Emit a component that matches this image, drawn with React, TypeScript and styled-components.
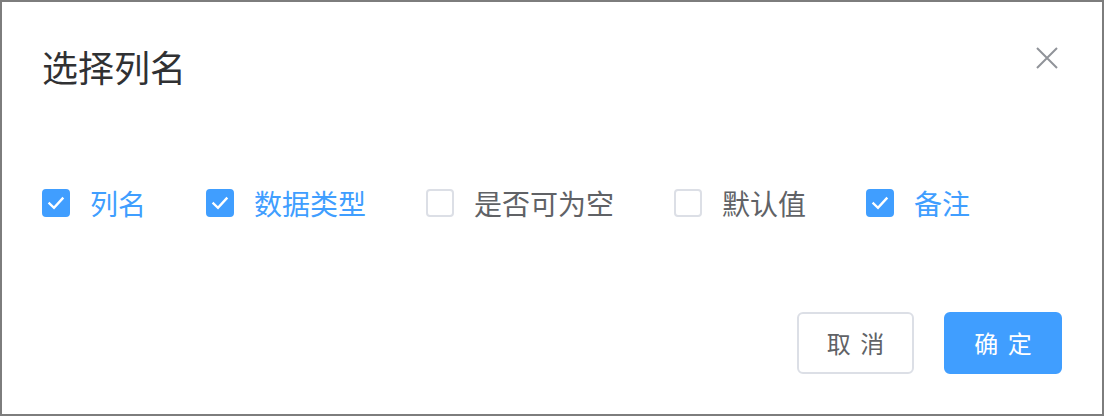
import React, { useState } from "react";
import styled, { createGlobalStyle } from "styled-components";

const Global = createGlobalStyle`
  html, body { margin: 0; padding: 0; background: #ffffff; }
  * { box-sizing: border-box; }
  body { font-family: "Noto Sans CJK SC", "Noto Sans", sans-serif; }
`;

const Dialog = styled.div`
  position: relative;
  width: 1104px;
  height: 416px;
  background: #ffffff;
  border: 2px solid #7d7d7d;
  display: flex;
  flex-direction: column;
`;

const Header = styled.div`
  padding: 40px 40px 0 40px;
`;

const Title = styled.div`
  font-size: 36px;
  line-height: 48px;
  color: #303133;
`;

const CloseButton = styled.button`
  position: absolute;
  top: 40px;
  right: 39px;
  width: 32px;
  height: 32px;
  padding: 0;
  border: none;
  background: transparent;
  cursor: pointer;
  display: flex;
  align-items: center;
  justify-content: center;
`;

const Body = styled.div`
  padding: 99px 40px 0 40px;
  flex: 1;
`;

const CheckRow = styled.div`
  display: flex;
  align-items: center;
  gap: 60px;
`;

const CheckItem = styled.label<{ $checked: boolean }>`
  display: flex;
  align-items: center;
  gap: 20px;
  cursor: pointer;
  font-size: 28px;
  line-height: 28px;
  color: ${(p) => (p.$checked ? "#409eff" : "#606266")};
  user-select: none;
`;

const Box = styled.span<{ $checked: boolean }>`
  position: relative;
  width: 28px;
  height: 28px;
  border-radius: 4px;
  border: 2px solid ${(p) => (p.$checked ? "#409eff" : "#dcdfe6")};
  background: ${(p) => (p.$checked ? "#409eff" : "#ffffff")};
  flex-shrink: 0;

  svg {
    position: absolute;
    left: -2px;
    top: -2px;
  }
`;

const Footer = styled.div`
  display: flex;
  justify-content: flex-end;
  gap: 30px;
  padding: 0 40px 40px 40px;
`;

const Button = styled.button<{ $primary?: boolean }>`
  width: ${(p) => (p.$primary ? "118px" : "117px")};
  height: 62px;
  border-radius: 6px;
  border: 2px solid ${(p) => (p.$primary ? "#409eff" : "#dcdfe6")};
  background: ${(p) => (p.$primary ? "#409eff" : "#ffffff")};
  color: ${(p) => (p.$primary ? "#ffffff" : "#606266")};
  font-family: "Noto Sans CJK SC", "Noto Sans", sans-serif;
  font-size: 24px;
  line-height: 24px;
  word-spacing: 4px;
  padding: 0;
  cursor: pointer;
  display: flex;
  align-items: center;
  justify-content: center;
  white-space: pre;
`;

const columns = ["列名", "数据类型", "是否可为空", "默认值", "备注"];

export default function App() {
  const [checked, setChecked] = useState<boolean[]>([true, true, false, false, true]);
  const toggle = (i: number) =>
    setChecked((c) => c.map((v, j) => (j === i ? !v : v)));

  return (
    <>
      <Global />
      <Dialog>
        <Header>
          <Title>选择列名</Title>
        </Header>
        <CloseButton aria-label="close">
          <svg width="32" height="32" viewBox="0 0 32 32">
            <path d="M6 6 L26 26 M26 6 L6 26" stroke="#909399" strokeWidth="2" fill="none" />
          </svg>
        </CloseButton>
        <Body>
          <CheckRow>
            {columns.map((c, i) => (
              <CheckItem key={c} $checked={checked[i]} onClick={() => toggle(i)}>
                <Box $checked={checked[i]}>
                  {checked[i] && (
                    <svg width="28" height="28" viewBox="0 0 28 28">
                      <path d="M7.5 14.5 L12 18.8 L20.5 9.5" stroke="#ffffff" strokeWidth="2.4" fill="none" strokeLinecap="square" />
                    </svg>
                  )}
                </Box>
                <span>{c}</span>
              </CheckItem>
            ))}
          </CheckRow>
        </Body>
        <Footer>
          <Button>取 消</Button>
          <Button $primary>确 定</Button>
        </Footer>
      </Dialog>
    </>
  );
}
